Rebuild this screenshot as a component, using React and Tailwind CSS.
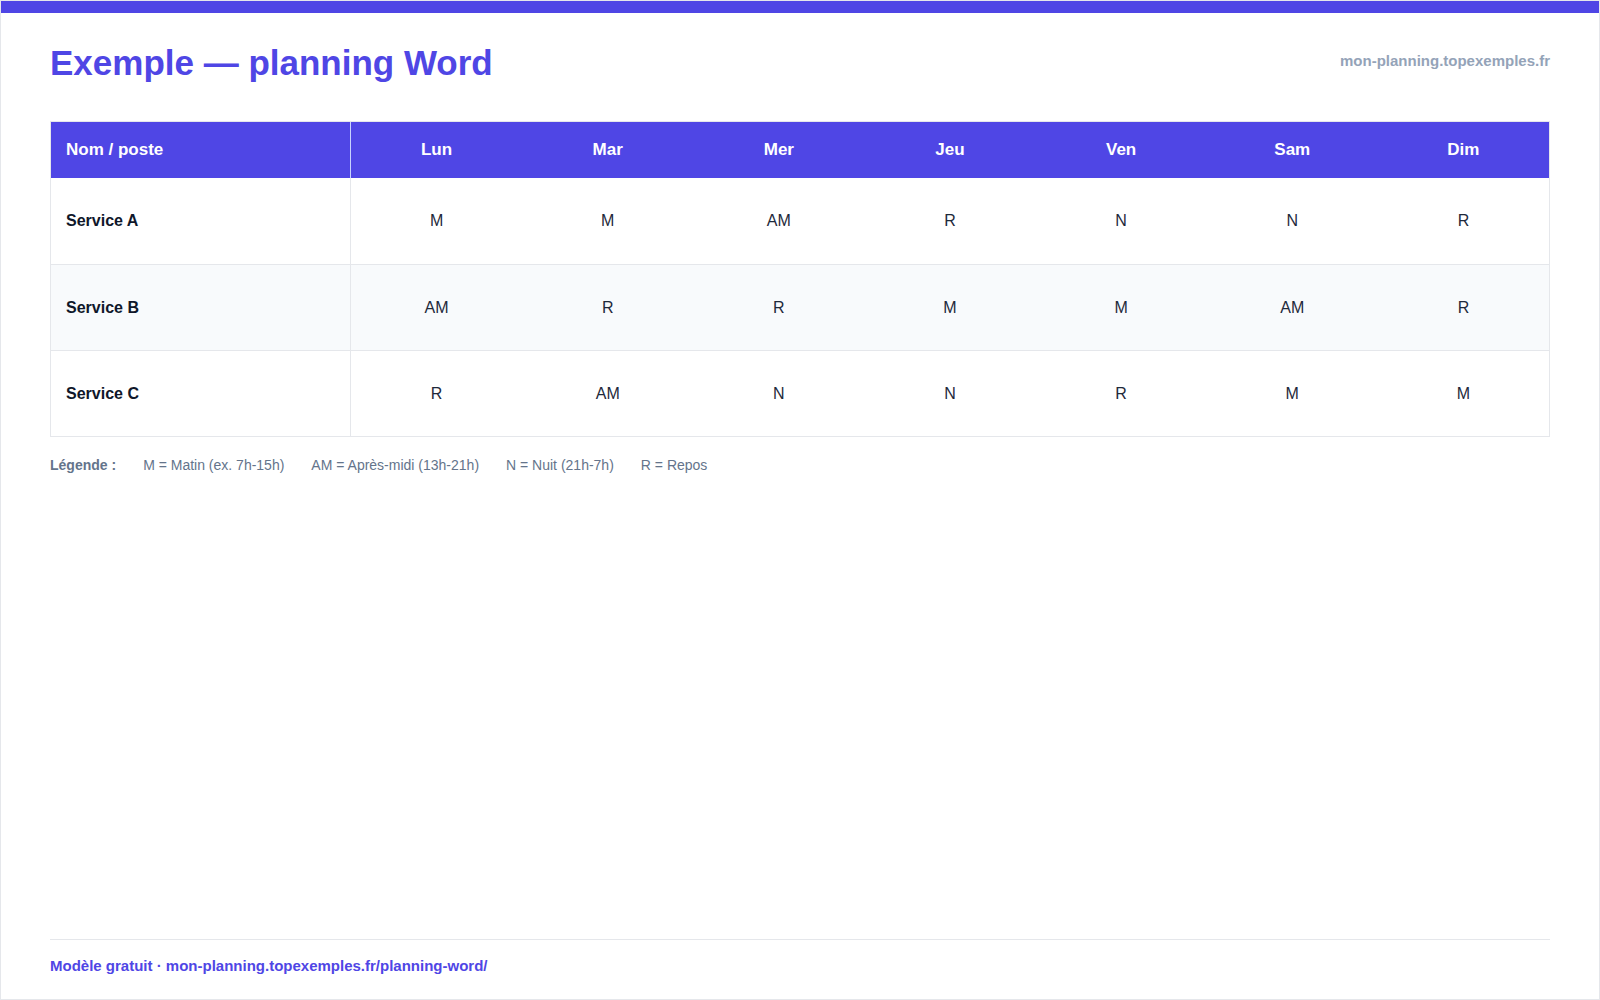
export default function App() {
  const days = ["Lun", "Mar", "Mer", "Jeu", "Ven", "Sam", "Dim"];
  const rows = [
    ["Service A", ["M", "M", "AM", "R", "N", "N", "R"]],
    ["Service B", ["AM", "R", "R", "M", "M", "AM", "R"]],
    ["Service C", ["R", "AM", "N", "N", "R", "M", "M"]],
  ];
  return (
    <div className="w-[1600px] h-[1000px] bg-white border border-[#e5e7eb] flex flex-col" style={{ fontFamily: '"Liberation Sans", Arial, sans-serif' }}>
      <div className="h-[12px] bg-[#4f46e5] shrink-0" />
      <div className="flex-1 flex flex-col px-[49px]">
        <div className="flex justify-between items-start pt-[28px]">
          <h1 className="text-[35px] font-bold text-[#4f46e5] leading-[44px]">Exemple — planning Word</h1>
          <div className="text-[15px] font-bold text-[#94a3b8] mt-[9px]">mon-planning.topexemples.fr</div>
        </div>
        <div className="mt-[36px] border border-[#e5e7eb]">
          <div className="flex h-[56px] bg-[#4f46e5] text-white font-bold text-[17px]">
            <div className="w-[300px] flex items-center px-[15px] border-r border-[#c7d2fe]">Nom / poste</div>
            {days.map((d) => (
              <div key={d} className="flex-1 flex items-center justify-center">{d}</div>
            ))}
          </div>
          {rows.map(([name, vals], i) => (
            <div key={name} className={`flex h-[86px] text-[16px] ${i === 1 ? "bg-[#f8fafc]" : "bg-white"} ${i > 0 ? "border-t border-[#e5e7eb]" : ""}`}>
              <div className="w-[300px] flex items-center px-[15px] font-bold text-[#0f172a] border-r border-[#e5e7eb]">{name}</div>
              {vals.map((v, j) => (
                <div key={j} className="flex-1 flex items-center justify-center text-[#1e293b]">{v}</div>
              ))}
            </div>
          ))}
        </div>
        <div className="flex gap-[27px] mt-[18px] text-[14px] text-[#64748b]">
          <span className="font-bold">Légende :</span>
          <span>M = Matin (ex. 7h-15h)</span>
          <span>AM = Après-midi (13h-21h)</span>
          <span>N = Nuit (21h-7h)</span>
          <span>R = Repos</span>
        </div>
        <div className="mt-auto border-t border-[#e5e7eb] pt-[15px] pb-[22px]">
          <div className="text-[15px] font-bold text-[#4f46e5]">Modèle gratuit · mon-planning.topexemples.fr/planning-word/</div>
        </div>
      </div>
    </div>
  );
}
